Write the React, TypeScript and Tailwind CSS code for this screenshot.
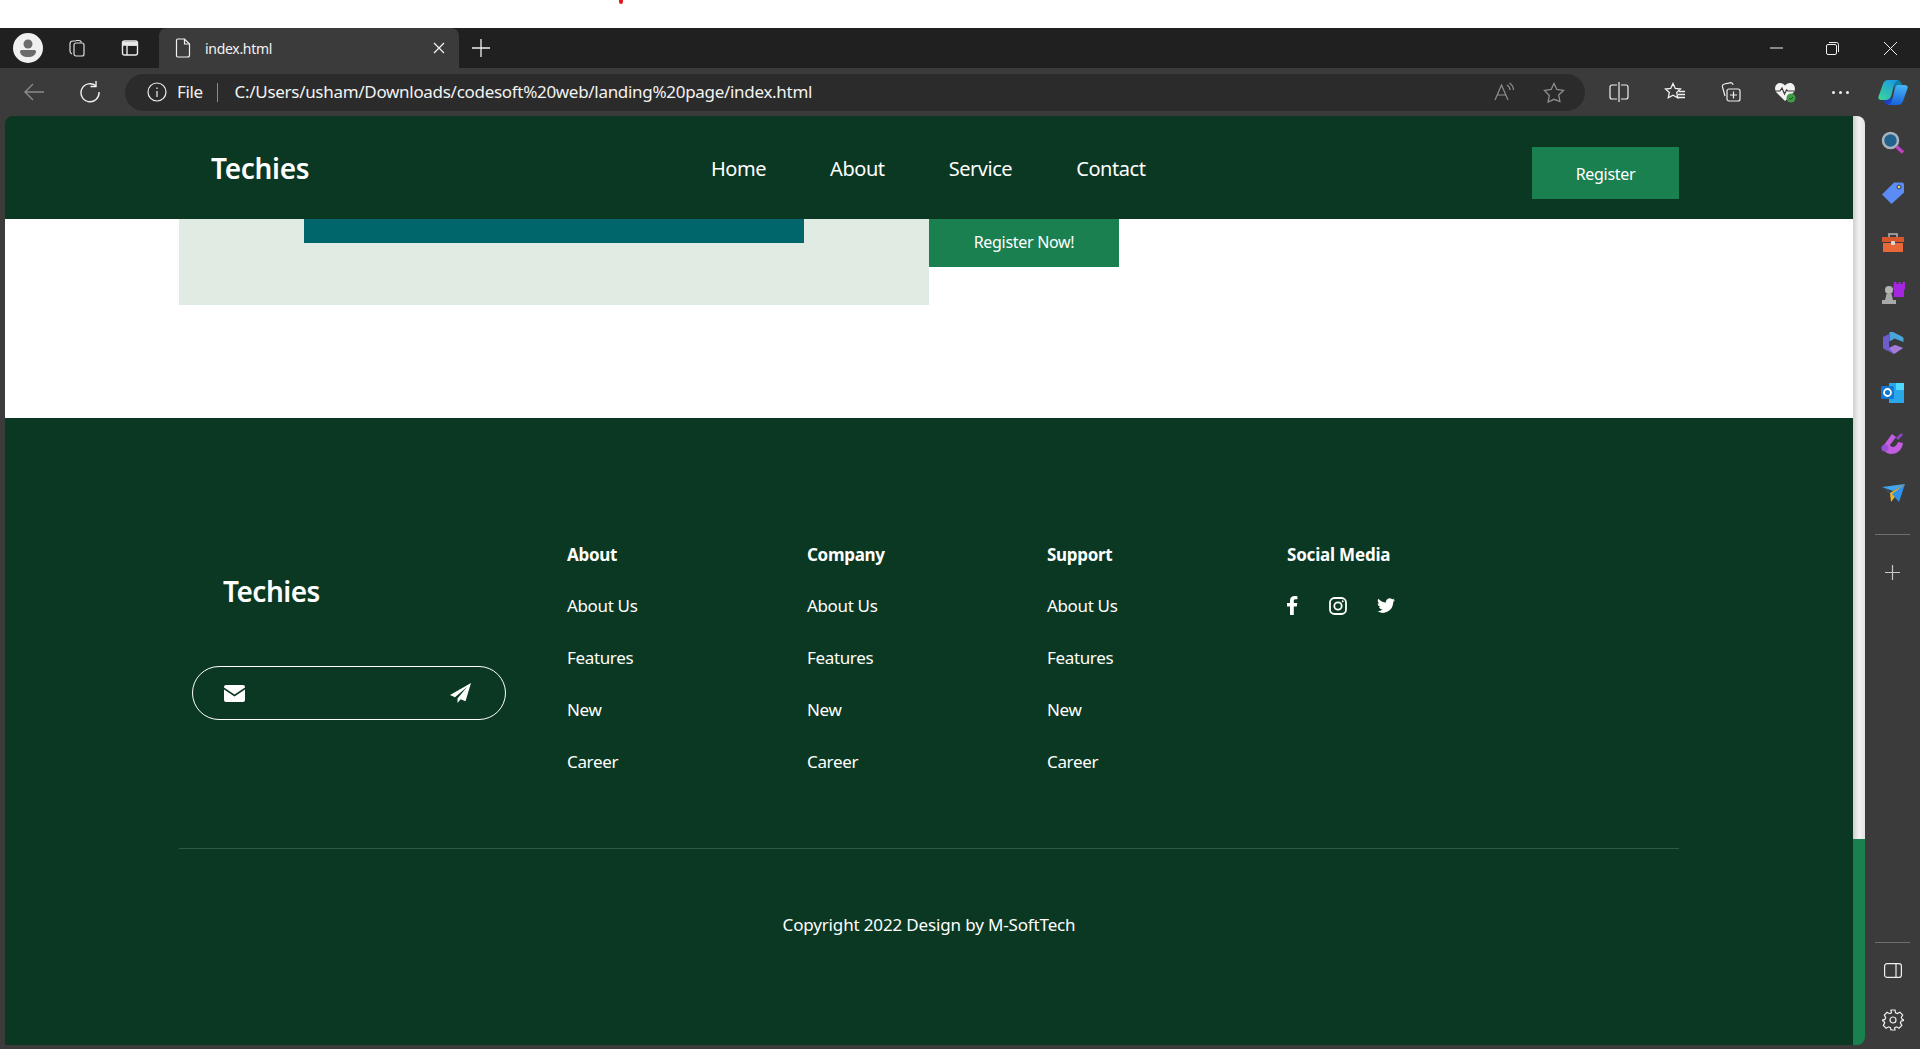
const LINKS = ["About Us", "Features", "New", "Career"];
const COLUMNS = ["About", "Company", "Support"];
const NAV = ["Home", "About", "Service", "Contact"];

function Tabs() {
  return (
    <div className="flex h-10 items-stretch bg-[#202020] text-[#f2f2f2]">
      <div className="flex w-[159px] items-center">
        <svg className="ml-[13px]" width="30" height="30" viewBox="0 0 30 30">
          <circle cx="15" cy="15" r="15" fill="#f0f0f0" />
          <circle cx="15" cy="11" r="4.5" fill="#6b6b6b" />
          <path d="M7 18.5c0-1 1-1.5 2-1.5h12c1 0 2 .5 2 1.500c0 3.500-3.500 5.500-8 5.500s-8-2-8-5.500z" fill="#6b6b6b" />
        </svg>
        <svg className="ml-[24px]" width="20" height="20" viewBox="0 0 20 20" fill="none" stroke="#dcdcdc" strokeWidth="1.200">
          <rect x="7" y="5" width="10" height="13" rx="2" />
          <path d="M5 16c-1-.5-2-1.500-2-3V6c0-2 1-3 3-3h3M9 2.500h3c1 0 2 .5 2.500 2" />
        </svg>
        <svg className="ml-[33px]" width="20" height="20" viewBox="0 0 20 20" fill="none" stroke="#e8e8e8" strokeWidth="1.400">
          <rect x="2.500" y="3" width="15" height="14" rx="2" />
          <path d="M3 4.500h14V7H7v10" />
          <path d="M3 5h14v2H3z" fill="#e8e8e8" />
        </svg>
      </div>
      <div className="flex w-[300px] items-center rounded-t-lg bg-[#3b3b3b] pl-[16px]">
        <svg width="16" height="20" viewBox="0 0 16 20" fill="none" stroke="#f0f0f0" strokeWidth="1.200">
          <path d="M2.500 1h7l5 5v11a2 2 0 0 1-2 2h-10a2 2 0 0 1-1-1V2.500A1.500 1.500 0 0 1 2.500 1z" />
          <path d="M9.500 1v5h5" />
        </svg>
        <span className="ml-[14px] w-[228px] text-[14px] tracking-[-0.3px]">index.html</span>
        <svg width="12" height="12" viewBox="0 0 12 12" stroke="#f0f0f0" strokeWidth="1.300">
          <path d="M1 1l10 10M11 1L1 11" />
        </svg>
      </div>
      <div className="flex items-center pl-[13px]">
        <svg width="18" height="18" viewBox="0 0 18 18" stroke="#f0f0f0" strokeWidth="1.300">
          <path d="M9 0v18M0 9h18" />
        </svg>
      </div>
      <div className="ml-auto flex items-center pr-[23px]">
        <svg width="13" height="2" viewBox="0 0 13 2" stroke="#f0f0f0">
          <path d="M0 1h13" />
        </svg>
        <svg className="ml-[43px]" width="13" height="13" viewBox="0 0 13 13" fill="none" stroke="#f0f0f0">
          <rect x=".5" y="2.500" width="10" height="10" rx="1.500" />
          <path d="M3 .5h7.500a2 2 0 0 1 2 2V10" />
        </svg>
        <svg className="ml-[45px]" width="13" height="13" viewBox="0 0 13 13" stroke="#f0f0f0">
          <path d="M0 0l13 13M13 0L0 13" />
        </svg>
      </div>
    </div>
  );
}

function Toolbar() {
  return (
    <div className="flex h-12 items-center bg-[#3b3b3b] text-[#f2f2f2]">
      <svg className="ml-[24px]" width="20" height="18" viewBox="0 0 20 18" fill="none" stroke="#8a8a8a" strokeWidth="1.400">
        <path d="M20 9H1M9 1L1 9l8 8" />
      </svg>
      <svg className="ml-[34px]" width="22" height="22" viewBox="0 0 22 22" fill="none" stroke="#f0f0f0" strokeWidth="1.400">
        <path d="M18 5a9 9 0 1 0 3 6" />
        <path d="M18 0v5.500h-5.500" />
      </svg>
      <div className="ml-[25px] flex h-[37px] w-[1460px] items-center rounded-full bg-[#2b2b2b]">
        <svg className="ml-[22px]" width="20" height="20" viewBox="0 0 20 20" fill="none" stroke="#f0f0f0" strokeWidth="1.200">
          <circle cx="10" cy="10" r="9" />
          <path d="M10 9v6M10 5.500v1.500" />
        </svg>
        <span className="ml-[10px] text-[17px] tracking-[-0.4px]">File</span>
        <span className="ml-[14px] h-[19px] w-px bg-[#8a8a8a]" />
        <span className="ml-[17px] text-[17px] tracking-[-0.3px]">C:/Users/usham/Downloads/codesoft%20web/landing%20page/index.html</span>
        <svg className="ml-auto" width="21" height="20" viewBox="0 0 21 20" fill="none" stroke="#8f8f8f" strokeWidth="1.200">
          <path d="M1 18L7.500 3 14 18M3.500 13h8" />
          <path d="M13 3a6 6 0 0 1 3 5M15.500 1a9 9 0 0 1 4 7" />
        </svg>
        <svg className="ml-[28px] mr-[20px]" width="22" height="21" viewBox="0 0 22 21" fill="none" stroke="#8f8f8f" strokeWidth="1.300">
          <path d="M11 1.500l2.900 6 6.600.9-4.800 4.600 1.200 6.500L11 17.300l-5.900 2.700 1.200-6.500L1.500 8.400l6.600-.9z" />
        </svg>
      </div>
      <svg className="ml-[24px]" width="20" height="20" viewBox="0 0 20 20" fill="none" stroke="#f0f0f0" strokeWidth="1.200">
        <path d="M8 3H3a2 2 0 0 0-2 2v10a2 2 0 0 0 2 2h5M12 3h5a2 2 0 0 1 2 2v10a2 2 0 0 1-2 2h-5M10 0v20" />
      </svg>
      <svg className="ml-[35px]" width="22" height="20" viewBox="0 0 22 20" fill="none" stroke="#f0f0f0" strokeWidth="1.300">
        <path d="M9 1.500l2.300 5 5.200.6-3.800 3.500 1 5.200L9 13.300l-4.700 2.500 1-5.200L1.500 7.100l5.200-.6z" />
        <path d="M15 9.500h6M14 12.500h7M13 15.500h8" />
      </svg>
      <svg className="ml-[35px]" width="20" height="20" viewBox="0 0 20 20" fill="none" stroke="#f0f0f0" strokeWidth="1.200">
        <path d="M4 14L1.500 5a2.500 2.500 0 0 1 1.800-3L9 .8c1.500-.3 2.700.4 3.200 2" />
        <rect x="6" y="7" width="13" height="12" rx="2" />
        <path d="M12.500 9.500v7M9 13h7" />
      </svg>
      <svg className="ml-[33px]" width="22" height="22" viewBox="0 0 22 22">
        <path d="M11 20L2.500 11.500C-.5 8 1.500 2 6 2c2.200 0 3.800 1 5 2.500C12.200 3 13.800 2 16 2c4.500 0 6.500 6 3.500 9.500z" fill="#f2f2f2" />
        <path d="M1 10h5l2-3 2.500 6 2-4 1.500 1h6" fill="none" stroke="#3b3b3b" strokeWidth="1.200" />
        <circle cx="17" cy="17" r="4.500" fill="#3f9c46" />
        <path d="M15 17l1.500 1.500 2.500-2.500" fill="none" stroke="#1c4d22" strokeWidth="1" />
      </svg>
      <div className="ml-[36px] flex gap-[4px]">
        <span className="h-[3px] w-[3px] rounded-full bg-[#f0f0f0]" />
        <span className="h-[3px] w-[3px] rounded-full bg-[#f0f0f0]" />
        <span className="h-[3px] w-[3px] rounded-full bg-[#f0f0f0]" />
      </div>
      <svg className="ml-[29px]" width="30" height="27" viewBox="0 0 30 27">
        <defs>
          <linearGradient id="cpa" x1="0.9" y1="0" x2="0.2" y2="1">
            <stop offset="0" stopColor="#1a96e6" />
            <stop offset="1" stopColor="#3ad29a" />
          </linearGradient>
          <linearGradient id="cpb" x1="0.6" y1="0" x2="0.4" y2="1">
            <stop offset="0" stopColor="#45b4f4" />
            <stop offset="1" stopColor="#1a62dc" />
          </linearGradient>
        </defs>
        <path d="M18 1h1c3 0 4.500 2 5 5h-4c-2 0-3 1-3.500 3L16 6c.5-2 1-4 2-5z" fill="#0f7fa8" />
        <path d="M12 26h-1c-3 0-4.500-2-5-5h2c2 0 4-1 5-3l1.500 3c-.5 2-1.200 4-2.500 5z" fill="#1a3fc8" />
        <path d="M10 1h10c-2 1-3.500 3-4 5l-2.500 10c-.6 3-3 5-6 5H3c-2 0-3.200-1.500-2.500-3.500L5 5c.8-2.500 2.800-4 5-4z" fill="url(#cpa)" />
        <path d="M20 6h7c2 0 3.200 1.500 2.500 3.500L25 22c-.8 2.500-2.800 4-5 4H10c2-1 3.500-3 4-5l2.500-10c.6-3 1-5 3.500-5z" fill="url(#cpb)" />
      </svg>
    </div>
  );
}

function SideBar() {
  return (
    <div className="flex flex-1 flex-col items-center pt-[15px] pb-[14px]">
      <div className="flex flex-col items-center gap-[26px]">
        <svg width="24" height="24" viewBox="0 0 24 24">
          <circle cx="9.500" cy="9.500" r="7.500" fill="#22628f" stroke="#a8b4bc" strokeWidth="2.500" />
          <path d="M15.500 15.500l6.500 6" stroke="#c13fc9" strokeWidth="3.500" />
        </svg>
        <svg width="24" height="24" viewBox="0 0 24 24">
          <path d="M13 1.500h8a2 2 0 0 1 2 2v8L10.500 23 1 13.500z" fill="#5b8cf5" />
          <circle cx="18" cy="6" r="2" fill="#f0d040" stroke="#1d3a7a" />
        </svg>
        <svg width="24" height="24" viewBox="0 0 24 24">
          <path d="M8 6V3h8v3" fill="none" stroke="#b5b5b5" strokeWidth="1.500" />
          <path d="M1 6h22v5H1z" fill="#d8562c" />
          <path d="M2 12h20v9H2z" fill="#e8683a" />
          <rect x="10" y="10" width="4" height="4" rx="1" fill="#d9d9d9" />
        </svg>
        <svg width="24" height="24" viewBox="0 0 24 24">
          <path d="M13 1h2.500v2h2V1h2v2h2V1H24v7l-1 1v7h-10V9l-1-1z" fill="#a526e0" />
          <circle cx="8" cy="9" r="4" fill="#b4b4b4" />
          <path d="M5.500 13h5l1.500 6h3v4H1v-4h3z" fill="#a8a8a8" />
        </svg>
        <svg width="24" height="24" viewBox="0 0 24 24">
          <path d="M12 1l9 4.500c1 .5 1.500 1 1.500 2.500v3l-9-3.500-5 3V1z" fill="#4aa5d8" />
          <path d="M2 6l6-3v14l6-3 8 3-9 6-10-5c-1-.5-1-1-1-2z" fill="#6d5cc9" />
          <path d="M8 17l6-3 8 3-9 6z" fill="#a57bd8" />
        </svg>
        <svg width="24" height="24" viewBox="0 0 24 24">
          <path d="M8 2h15v20H8z" fill="#28a8ea" />
          <path d="M15 2h8v7h-8z" fill="#50d9ff" />
          <rect x="0" y="5" width="13" height="13" rx="1.500" fill="#0f78d4" />
          <circle cx="6.500" cy="11.500" r="3.500" fill="none" stroke="#fff" strokeWidth="1.800" />
        </svg>
        <svg width="24" height="24" viewBox="0 0 24 24">
          <path d="M3 14L11 3l4 3-6 8c1 3 6 3 8-3l5 1c-1 8-7 11-12 11-5 0-8-4-7-9z" fill="#c45ee0" />
          <circle cx="4" cy="17" r="3.500" fill="#9b51d6" />
          <path d="M15 7l5-5 2 2-5 5z" fill="#8d44c9" />
        </svg>
        <svg width="24" height="24" viewBox="0 0 24 24">
          <path d="M1 6l23-3-12 7z" fill="#42a5f0" />
          <path d="M24 3L9 12l1 9z" fill="#f0b429" />
          <path d="M24 3L11 13l7 8z" fill="#2f92ee" />
          <path d="M1 6l9 6-1 0z" fill="#2f7fd8" />
        </svg>
      </div>
      <div className="mt-[29px] h-px w-[35px] bg-[#6e6e6e]" />
      <svg className="mt-[30px]" width="15" height="15" viewBox="0 0 15 15" stroke="#c8c8c8" strokeWidth="1.200">
        <path d="M7.500 0v15M0 7.500h15" />
      </svg>
      <div className="mt-auto h-px w-[35px] bg-[#6e6e6e]" />
      <svg className="mt-[20px]" width="18" height="15" viewBox="0 0 18 15" fill="none" stroke="#f0f0f0" strokeWidth="1.200">
        <rect x=".6" y=".6" width="16.800" height="13.800" rx="2.500" />
        <path d="M12 .6v13.800" />
      </svg>
      <svg className="mt-[31px]" width="22" height="22" viewBox="0 0 22 22" fill="none" stroke="#f0f0f0" strokeWidth="1.200">
        <circle cx="11" cy="11" r="3" />
        <path d="M9 1h4l.6 2.800 1.800.8 2.500-1.400 2.800 2.800-1.400 2.500.8 1.800L22 11v.5l-2.800.6-.8 1.800 1.400 2.500-2.800 2.800-2.500-1.400-1.800.8L13 21H9l-.6-2.400-1.800-.8-2.500 1.400-2.800-2.800 1.400-2.500-.8-1.800L0 11.500V11l2.900-.6.8-1.800-1.400-2.500 2.800-2.800 2.500 1.400 1.800-.8z" />
      </svg>
    </div>
  );
}

function PageNav() {
  return (
    <div className="flex h-[103px] shrink-0 items-start rounded-tl-lg bg-[#0b3823] text-white">
      <div className="ml-[206px] mt-[33px] w-[500px] text-[28px] font-semibold leading-[38px] tracking-[-0.3px]">Techies</div>
      <ul className="mt-[40px] flex gap-[64px] text-[20px] leading-[26px] tracking-[-0.45px]">
        {NAV.map((item) => (
          <li key={item}>{item}</li>
        ))}
      </ul>
      <button className="ml-auto mr-[174px] mt-[31px] h-[52px] w-[147px] bg-[#1a8050] pt-[1px] text-[16px] tracking-[-0.3px] text-white">
        Register
      </button>
    </div>
  );
}

function Hero() {
  return (
    <div className="flex h-[199px] shrink-0 items-start bg-white pl-[174px]">
      <div className="h-[86px] w-[750px] bg-[#e0ebe4] pl-[125px]">
        <div className="h-[24px] w-[500px] bg-[#00666b]" />
      </div>
      <button className="h-[48px] w-[190px] bg-[#1a8050] pb-[2px] text-[16px] tracking-[-0.3px] text-white">Register Now!</button>
    </div>
  );
}

function FooterColumn({ title }: { title: string }) {
  return (
    <div className="w-[240px]">
      <h4 className="text-[17px] font-bold leading-[24px] tracking-[-0.3px]">{title}</h4>
      <ul className="mt-[27px] flex flex-col gap-[28px] text-[17px] leading-[24px] tracking-[-0.35px]">
        {LINKS.map((link) => (
          <li key={link}>{link}</li>
        ))}
      </ul>
    </div>
  );
}

function Footer() {
  return (
    <footer className="flex flex-1 flex-col bg-[#0b3823] pt-[125px] text-white">
      <div className="flex pl-[187px]">
        <div className="w-[375px]">
          <div className="ml-[31px] mt-[29px] text-[28px] font-semibold leading-[38px] tracking-[-0.5px]">Techies</div>
          <div className="mt-[56px] flex h-[54px] w-[314px] items-center justify-between rounded-full border border-white pl-[31px] pr-[34px]">
            <svg width="21" height="17" viewBox="0 0 21 17" fill="#fff">
              <path d="M2 0h17a2 2 0 0 1 2 2v.6l-10.500 7L0 2.600V2a2 2 0 0 1 2-2z" />
              <path d="M0 4.600l10.500 7 10.500-7V15a2 2 0 0 1-2 2H2a2 2 0 0 1-2-2z" />
            </svg>
            <svg width="21" height="20" viewBox="0 0 21 20" fill="#fff">
              <path d="M21 0L0 12l5 2.200L17 4 7.500 15.500V20l3.200-3.800 4.800 2z" />
            </svg>
          </div>
        </div>
        {COLUMNS.map((title) => (
          <FooterColumn key={title} title={title} />
        ))}
        <div>
          <h4 className="text-[17px] font-bold leading-[24px] tracking-[-0.2px]">Social Media</h4>
          <div className="mt-[29px] flex items-center">
            <svg width="11" height="19" viewBox="0 0 11 19" fill="#fff">
              <path d="M3 19v-8.500H0V7h3V4.500C3 1.500 4.800 0 7.500 0c1.300 0 2.500.1 2.900.2v3H8.500C7 3.200 6.800 4 6.800 5v2h3.500l-.5 3.500h-3V19z" />
            </svg>
            <svg className="ml-[31px]" width="18" height="18" viewBox="0 0 18 18" fill="none" stroke="#fff" strokeWidth="1.800">
              <rect x="1" y="1" width="16" height="16" rx="4.500" />
              <circle cx="9" cy="9" r="3.700" />
              <circle cx="13.700" cy="4.300" r=".6" fill="#fff" strokeWidth="1" />
            </svg>
            <svg className="ml-[30px]" width="18" height="15" viewBox="0 0 18 15" fill="#fff">
              <path d="M18 1.800c-.7.3-1.400.5-2.100.6.800-.5 1.300-1.200 1.600-2-.7.4-1.500.7-2.300.9A3.700 3.700 0 0 0 9 4.600C6 4.500 3.300 3 1.300.7.300 2.400.800 4.600 2.400 5.700c-.6 0-1.200-.2-1.700-.5 0 1.800 1.300 3.400 3 3.700-.5.100-1.100.2-1.700.1.500 1.500 1.900 2.500 3.500 2.600A7.500 7.500 0 0 1 0 13.100 10.500 10.500 0 0 0 16.200 4.200c.7-.6 1.300-1.400 1.800-2.400z" />
            </svg>
          </div>
        </div>
      </div>
      <div className="ml-[174px] mt-[74px] h-px w-[1500px] bg-[#2d5a44]" />
      <p className="mt-[64px] w-[1848px] text-center text-[17px] leading-[24px] tracking-[-0.15px]">Copyright 2022 Design by M-SoftTech</p>
    </footer>
  );
}

export default function App() {
  return (
    <div className="flex h-[1049px] w-[1920px] flex-col overflow-hidden bg-white font-['Noto_Sans','Open_Sans',sans-serif]">
      <div className="h-[28px] shrink-0 pl-[619px]">
        <div className="h-[4px] w-[4px] rounded-b-full bg-[#e01b24]" />
      </div>
      <Tabs />
      <Toolbar />
      <div className="flex min-h-0 flex-1 bg-[#3b3b3b] pb-[4px] pl-[5px]">
        <div className="flex w-[1848px] flex-col">
          <PageNav />
          <Hero />
          <Footer />
        </div>
        <div className="flex w-[12px] flex-col overflow-hidden rounded-r-lg">
          <div className="h-[723px] bg-gradient-to-r from-[#cfcfcf] via-[#f2f2f2] to-[#e4e4e4]" />
          <div className="flex-1 bg-[#1a8050]" />
        </div>
        <SideBar />
      </div>
    </div>
  );
}
